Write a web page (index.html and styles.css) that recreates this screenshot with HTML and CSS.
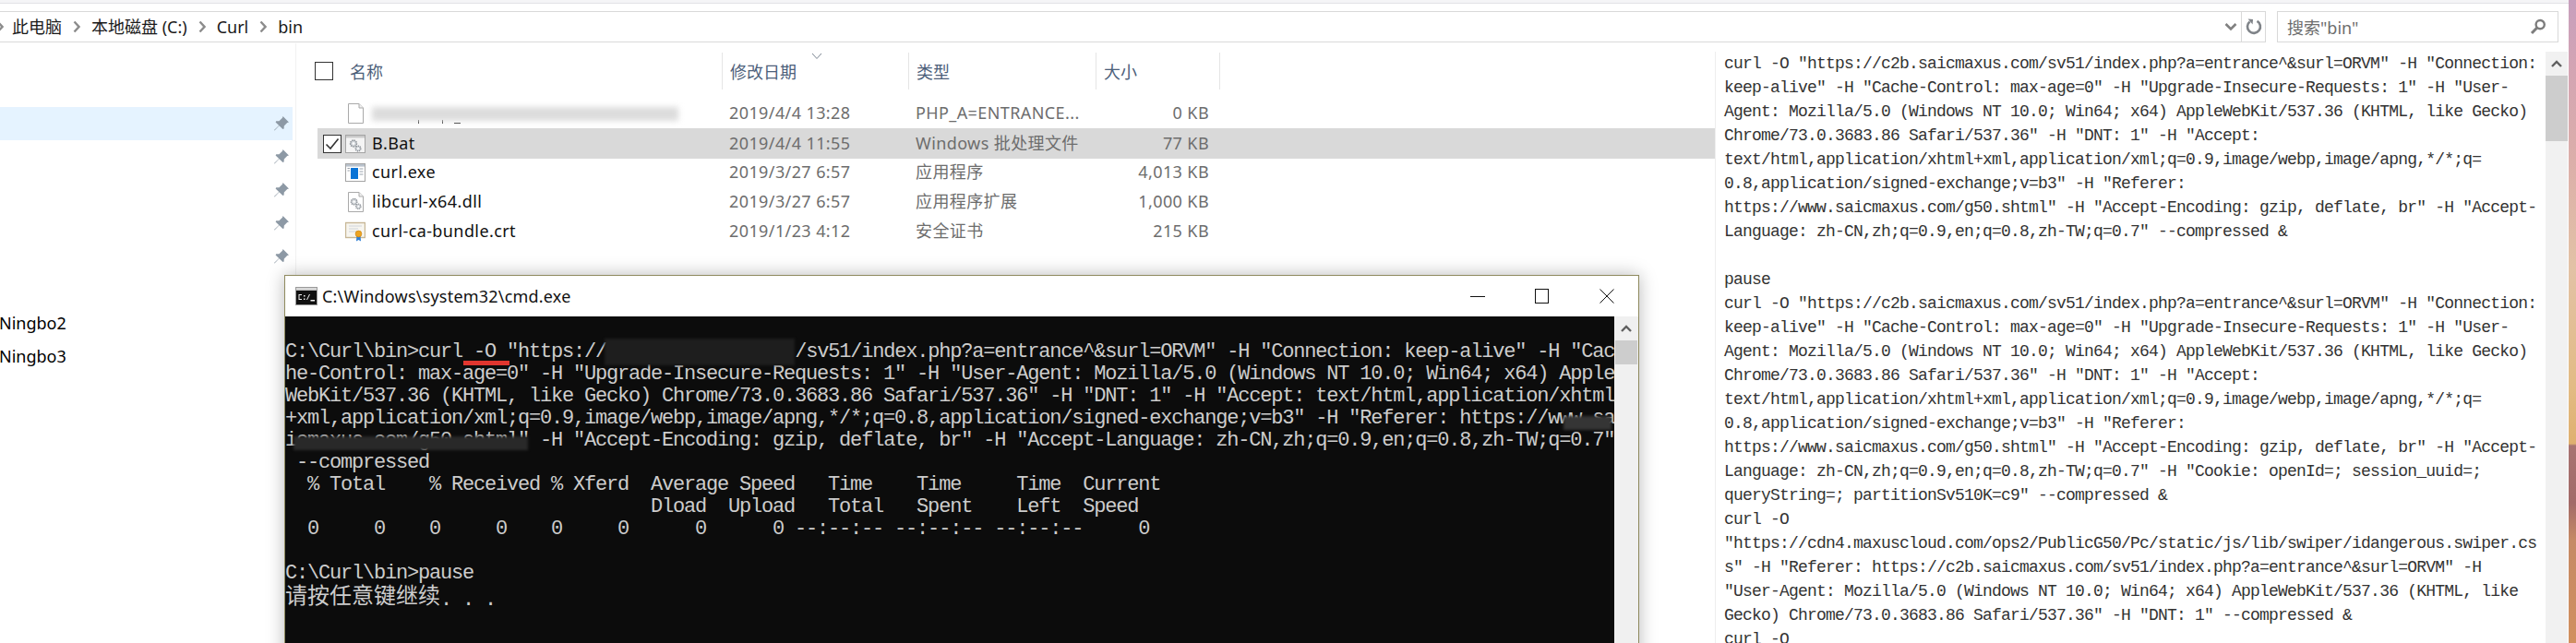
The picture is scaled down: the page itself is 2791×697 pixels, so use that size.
FILE: index.html
```html
<!DOCTYPE html>
<html lang="zh-CN">
<head>
<meta charset="utf-8">
<title>bin</title>
<link rel="stylesheet" href="styles.css">
</head>
<body>
<svg class="defs" width="0" height="0" aria-hidden="true">
  <defs>
    <symbol id="chev" viewBox="0 0 8 14"><path d="M1.5 1.5 6.5 7 1.5 12.5" fill="none" stroke="#8c8c8c" stroke-width="2.4"/></symbol>
    <symbol id="pin" viewBox="0 0 18 18"><path d="M10.5 1 17 7.5 15.2 8 11.8 11.6 11.6 14.6 10.4 15 6.5 11.2 1.5 16.5 1 16 6.2 10.9 2.6 7.4 3.2 6.3 6.4 6.2 10 2.8Z" fill="#8d99a5"/></symbol>
    <symbol id="gears" viewBox="0 0 16 16">
      <circle cx="6" cy="6" r="3.4" fill="#d4d8dc" stroke="#8b9096" stroke-width="1.6" stroke-dasharray="1.4 .9"/>
      <circle cx="6" cy="6" r="1.3" fill="#fff"/>
      <circle cx="11" cy="11.5" r="2.8" fill="#d4d8dc" stroke="#8b9096" stroke-width="1.4" stroke-dasharray="1.3 .8"/>
      <circle cx="11" cy="11.5" r="1" fill="#fff"/>
    </symbol>
  </defs>
</svg>

<div class="screen">
  <div class="shell">
    <div class="topstrip"></div>

    <div class="toolbar">
      <div class="address">
        <nav class="crumbs">
          <svg class="chev chev-first"><use href="#chev"/></svg>
          <span class="crumb">此电脑</span>
          <svg class="chev"><use href="#chev"/></svg>
          <span class="crumb">本地磁盘 (C:)</span>
          <svg class="chev"><use href="#chev"/></svg>
          <span class="crumb">Curl</span>
          <svg class="chev"><use href="#chev"/></svg>
          <span class="crumb">bin</span>
        </nav>
        <div class="addr-drop">
          <svg width="14" height="10" viewBox="0 0 14 10"><path d="M1.5 2 7 7.5 12.5 2" fill="none" stroke="#808080" stroke-width="2.6"/></svg>
        </div>
        <div class="addr-refresh">
          <svg width="18" height="18" viewBox="0 0 18 18"><path d="M12.5 2.8A7 7 0 1 1 4.6 3.4" fill="none" stroke="#7f8388" stroke-width="2.6"/><path d="M2.6 .6 8 1 7.6 6.6Z" fill="#7f8388"/></svg>
        </div>
      </div>
      <div class="search">
        <span class="search-text">搜索"bin"</span>
        <svg width="18" height="18" viewBox="0 0 18 18"><circle cx="11.2" cy="6.6" r="4.6" fill="none" stroke="#7d7d7d" stroke-width="2.4"/><path d="M7.8 10 2 16" stroke="#7d7d7d" stroke-width="3" fill="none"/></svg>
      </div>
    </div>

    <div class="content">
      <aside class="sidebar">
        <div class="nav-row nav-row-active"><svg class="pin"><use href="#pin"/></svg></div>
        <div class="nav-row"><svg class="pin"><use href="#pin"/></svg></div>
        <div class="nav-row"><svg class="pin"><use href="#pin"/></svg></div>
        <div class="nav-row"><svg class="pin"><use href="#pin"/></svg></div>
        <div class="nav-row"><svg class="pin"><use href="#pin"/></svg></div>
        <div class="nav-row"></div>
        <div class="nav-row nav-label">Ningbo2</div>
        <div class="nav-row nav-label">Ningbo3</div>
      </aside>

      <section class="files">
        <div class="file-head">
          <div class="head-name"><span class="checkbox"></span><span>名称</span></div>
          <div class="head-cell">修改日期<svg class="sort" width="12" height="8" viewBox="0 0 12 8"><path d="M1 1 6 6.5 11 1" fill="none" stroke="#7d8793" stroke-width="1"/></svg></div>
          <div class="head-cell">类型</div>
          <div class="head-cell head-last">大小</div>
        </div>

        <div class="file-row">
          <div class="name">
            <span class="check-slot"></span>
            <svg class="file-icon" viewBox="0 0 22 22"><path d="M3.5 .5H15L19.5 5V21.5H3.5Z" fill="#fff" stroke="#a9a9a9"/><path d="M15 .5V5H19.5" fill="#f0f0f0" stroke="#a9a9a9"/></svg>
            <span class="smeared"><span class="smear"></span></span>
          </div>
          <div class="cell">2019/4/4 13:28</div>
          <div class="cell">PHP_A=ENTRANCE...</div>
          <div class="cell size">0 KB</div>
        </div>

        <div class="file-row file-row-selected">
          <div class="name">
            <span class="check-slot checkbox checkbox-on">
              <svg width="18" height="18" viewBox="0 0 18 18"><path d="M2.5 9.5 7 14 15.5 3.5" fill="none" stroke="#333" stroke-width="1.6"/></svg>
            </span>
            <svg class="file-icon" viewBox="0 0 22 22"><rect x=".5" y="1.5" width="21" height="19" fill="#f4f4f4" stroke="#a4a4a4"/><rect x="1" y="2" width="20" height="2.4" fill="#c9c9c9"/><use href="#gears" x="3" y="4.5" width="16" height="16"/></svg>
            <span class="file-name">B.Bat</span>
          </div>
          <div class="cell">2019/4/4 11:55</div>
          <div class="cell">Windows 批处理文件</div>
          <div class="cell size">77 KB</div>
        </div>

        <div class="file-row">
          <div class="name">
            <span class="check-slot"></span>
            <svg class="file-icon" viewBox="0 0 22 22"><rect x=".5" y="1.5" width="21" height="19" fill="#fff" stroke="#a4a4a4"/><rect x="1" y="2" width="20" height="2.6" fill="#b9c2cc"/><rect x="6" y="6" width="8" height="12" fill="#0a74d6"/><path d="M2.5 6.5H5M2.5 9H5M15.5 7H19.5M15.5 10H19.5M15.5 13H19.5" stroke="#9aa3ad"/></svg>
            <span class="file-name">curl.exe</span>
          </div>
          <div class="cell">2019/3/27 6:57</div>
          <div class="cell">应用程序</div>
          <div class="cell size">4,013 KB</div>
        </div>

        <div class="file-row">
          <div class="name">
            <span class="check-slot"></span>
            <svg class="file-icon" viewBox="0 0 22 22"><path d="M3.5 .5H15L19.5 5V21.5H3.5Z" fill="#fff" stroke="#a9a9a9"/><path d="M15 .5V5H19.5" fill="#f0f0f0" stroke="#a9a9a9"/><use href="#gears" x="4" y="5" width="15" height="15"/></svg>
            <span class="file-name">libcurl-x64.dll</span>
          </div>
          <div class="cell">2019/3/27 6:57</div>
          <div class="cell">应用程序扩展</div>
          <div class="cell size">1,000 KB</div>
        </div>

        <div class="file-row">
          <div class="name">
            <span class="check-slot"></span>
            <svg class="file-icon" viewBox="0 0 22 22"><rect x=".5" y="1.5" width="21" height="16" fill="#f7f5ef" stroke="#c7b796" stroke-width="1.4"/><path d="M4 5H18M4 8H14M4 11H12" stroke="#cfd4da"/><path d="M12.5 15 12 21.5 14.5 20 17 21.5 16.5 15Z" fill="#2e7fd6"/><circle cx="14.5" cy="13.5" r="3.4" fill="#eda421" stroke="#c67f12" stroke-width=".6"/></svg>
            <span class="file-name">curl-ca-bundle.crt</span>
          </div>
          <div class="cell">2019/1/23 4:12</div>
          <div class="cell">安全证书</div>
          <div class="cell size">215 KB</div>
        </div>
      </section>

      <section class="notes">
<pre class="notes-text">curl -O "https://c2b.saicmaxus.com/sv51/index.php?a=entrance^&amp;surl=ORVM" -H "Connection:
keep-alive" -H "Cache-Control: max-age=0" -H "Upgrade-Insecure-Requests: 1" -H "User-
Agent: Mozilla/5.0 (Windows NT 10.0; Win64; x64) AppleWebKit/537.36 (KHTML, like Gecko)
Chrome/73.0.3683.86 Safari/537.36" -H "DNT: 1" -H "Accept:
text/html,application/xhtml+xml,application/xml;q=0.9,image/webp,image/apng,*/*;q=
0.8,application/signed-exchange;v=b3" -H "Referer:
https://www.saicmaxus.com/g50.shtml" -H "Accept-Encoding: gzip, deflate, br" -H "Accept-
Language: zh-CN,zh;q=0.9,en;q=0.8,zh-TW;q=0.7" --compressed &amp;

pause
curl -O "https://c2b.saicmaxus.com/sv51/index.php?a=entrance^&amp;surl=ORVM" -H "Connection:
keep-alive" -H "Cache-Control: max-age=0" -H "Upgrade-Insecure-Requests: 1" -H "User-
Agent: Mozilla/5.0 (Windows NT 10.0; Win64; x64) AppleWebKit/537.36 (KHTML, like Gecko)
Chrome/73.0.3683.86 Safari/537.36" -H "DNT: 1" -H "Accept:
text/html,application/xhtml+xml,application/xml;q=0.9,image/webp,image/apng,*/*;q=
0.8,application/signed-exchange;v=b3" -H "Referer:
https://www.saicmaxus.com/g50.shtml" -H "Accept-Encoding: gzip, deflate, br" -H "Accept-
Language: zh-CN,zh;q=0.9,en;q=0.8,zh-TW;q=0.7" -H "Cookie: openId=; session_uuid=;
queryString=; partitionSv510K=c9" --compressed &amp;
curl -O
"https://cdn4.maxuscloud.com/ops2/PublicG50/Pc/static/js/lib/swiper/idangerous.swiper.cs
s" -H "Referer: https://c2b.saicmaxus.com/sv51/index.php?a=entrance^&amp;surl=ORVM" -H
"User-Agent: Mozilla/5.0 (Windows NT 10.0; Win64; x64) AppleWebKit/537.36 (KHTML, like
Gecko) Chrome/73.0.3683.86 Safari/537.36" -H "DNT: 1" --compressed &amp;
curl -O</pre>
      </section>

      <div class="scrollbar">
        <div class="scroll-up">
          <svg width="12" height="8" viewBox="0 0 12 8"><path d="M1 7 6 2 11 7" fill="none" stroke="#606060" stroke-width="2.4"/></svg>
        </div>
        <div class="scroll-thumb"></div>
      </div>
    </div>
  </div>

  <div class="wallpaper"></div>

  <div class="cmd">
    <div class="cmd-title">
      <svg class="cmd-icon" viewBox="0 0 24 20"><rect width="24" height="20" fill="#9a9a9a"/><rect x="1" y="1" width="22" height="2.5" fill="#d8d8d8"/><rect x="1" y="4" width="22" height="15" fill="#111"/><path d="M3.5 8H7V9H4.5V13H7V14H3.5ZM9 9H10.5V10.5H9ZM9 12.5H10.5V14H9ZM12 14 15 8H16L13 14ZM16.5 14H21V15.5H16.5Z" fill="#f2f2f2"/></svg>
      <span class="cmd-name">C:\Windows\system32\cmd.exe</span>
      <div class="cmd-controls">
        <svg width="16" height="16" viewBox="0 0 16 16"><path d="M0 8.5H16" stroke="#111" stroke-width="1"/></svg>
        <svg width="16" height="16" viewBox="0 0 16 16"><rect x=".5" y=".5" width="14" height="15" fill="none" stroke="#111"/></svg>
        <svg width="16" height="16" viewBox="0 0 16 16"><path d="M.5.5 15.5 15.5M15.5.5.5 15.5" stroke="#111" stroke-width="1"/></svg>
      </div>
    </div>
    <div class="cmd-body">
<pre class="console">C:\Curl\bin&gt;curl<span class="marked"> -O </span>"https://<span class="mask mask-url">                 </span>/sv51/index.php?a=entrance^&amp;surl=ORVM" -H "Connection: keep-alive" -H "Cac
he-Control: max-age=0" -H "Upgrade-Insecure-Requests: 1" -H "User-Agent: Mozilla/5.0 (Windows NT 10.0; Win64; x64) Apple
WebKit/537.36 (KHTML, like Gecko) Chrome/73.0.3683.86 Safari/537.36" -H "DNT: 1" -H "Accept: text/html,application/xhtml
+xml,application/xml;q=0.9,image/webp,image/apng,*/*;q=0.8,application/signed-exchange;v=b3" -H "Referer: https://ww<span class="mask mask-end">w.sa</span>
i<span class="mask mask-line">cmaxus.com/g50.shtml"</span> -H "Accept-Encoding: gzip, deflate, br" -H "Accept-Language: zh-CN,zh;q=0.9,en;q=0.8,zh-TW;q=0.7"
 --compressed
  % Total    % Received % Xferd  Average Speed   Time    Time     Time  Current
                                 Dload  Upload   Total   Spent    Left  Speed
  0     0    0     0    0     0      0      0 --:--:-- --:--:-- --:--:--     0

C:\Curl\bin&gt;pause
<span class="cjk">请按任意键继续</span>. . .</pre>
      <div class="cmd-scroll">
        <div class="cmd-scroll-up">
          <svg width="12" height="8" viewBox="0 0 12 8"><path d="M1 7 6 2 11 7" fill="none" stroke="#606060" stroke-width="2.4"/></svg>
        </div>
        <div class="cmd-scroll-thumb"></div>
      </div>
    </div>
  </div>
</div>
</body>
</html>
```

FILE: styles.css
```css
* { box-sizing: border-box; }

html, body {
  margin: 0;
  padding: 0;
  background: #fff;
  overflow: hidden;
}

.defs { position: absolute; }

.screen {
  position: relative;
  display: flex;
  width: 2791px;
  height: 697px;
  overflow: hidden;
  font-family: "Noto Sans", "Noto Sans CJK SC", sans-serif;
  font-size: 18px;
  color: #111;
}

.shell {
  flex: 0 0 2783px;
  display: flex;
  flex-direction: column;
  background: #fff;
}

.wallpaper {
  flex: 1;
  background: linear-gradient(180deg,
    #c79fbd 0, #d3a4b4 70px, #dbaeaa 170px, #e2c2a6 290px, #e2bb84 420px, #dfb070 481px,
    #a87472 483px, #a26a68 545px, #c58a66 585px, #d1905f 697px);
}

.topstrip {
  height: 4px;
  background: #f5f5f7;
  border-bottom: 1px solid #e2e2e6;
}

/* address bar */
.toolbar {
  display: flex;
  height: 34px;
  margin-top: 8px;
}

.address {
  flex: 0 0 2455px;
  display: flex;
  align-items: center;
  border: 1px solid #d9d9d9;
  border-left: 0;
}

.crumbs {
  flex: 1;
  display: flex;
  align-items: center;
  color: #1a1a1a;
}

.crumb { line-height: 24px; }

.chev {
  width: 8px;
  height: 14px;
  margin: 0 12px;
}

.chev-first {
  margin: 0 9px 0 -4px;
}

.addr-drop {
  flex: 0 0 26px;
  display: flex;
  justify-content: center;
  padding-left: 4px;
}

.addr-refresh {
  flex: 0 0 26px;
  height: 100%;
  display: flex;
  align-items: center;
  justify-content: center;
  border-left: 1px solid #d9d9d9;
}

.search {
  flex: 0 0 305px;
  margin-left: 12px;
  display: flex;
  align-items: center;
  justify-content: space-between;
  padding: 0 12px 0 10px;
  border: 1px solid #d9d9d9;
}

.search-text { color: #6d6d6d; }

/* panes */
.content {
  flex: 1;
  display: flex;
  min-height: 0;
  margin-top: 1px;
}

.sidebar {
  flex: 0 0 320px;
  padding-top: 69px;
}

.nav-row {
  height: 36px;
  width: 317px;
  display: flex;
  align-items: center;
  justify-content: flex-end;
  padding-right: 3px;
}

.nav-row-active { background: #e5f3ff; }

.nav-label {
  justify-content: flex-start;
  padding: 0;
  margin-left: -1px;
  color: #000;
}

.pin {
  width: 18px;
  height: 18px;
}

.files {
  flex: 0 0 1538px;
  padding-top: 10px;
  border-left: 1px solid #f2f2f2;
}

.file-head {
  display: grid;
  grid-template-columns: 441px 202px 203px 135px;
  height: 40px;
  margin-left: 20px;
  color: #4c607a;
}

.head-name {
  display: flex;
  align-items: center;
  gap: 18px;
}

.head-cell {
  position: relative;
  display: flex;
  align-items: center;
  padding-left: 8px;
  border-left: 1px solid #e5e5e5;
}

.head-last { border-right: 1px solid #e5e5e5; }

.sort {
  position: absolute;
  left: 96px;
  top: 0;
}

.checkbox {
  width: 20px;
  height: 20px;
  flex: none;
  background: #fff;
  border: 1px solid #333;
}

.file-row {
  display: grid;
  grid-template-columns: 437px 202px 203px 131px;
  height: 32px;
  align-items: center;
  margin-left: 23px;
  color: #6d6d6d;
  letter-spacing: .4px;
}

.file-head + .file-row { margin-top: 10px; }

.file-row-selected { background: #d9d9d9; height: 33px; margin-bottom: -1px; }

.name {
  display: flex;
  align-items: center;
  padding-left: 6px;
  color: #111;
}

.check-slot {
  flex: 0 0 20px;
  height: 20px;
  margin-right: 4px;
}

.checkbox-on {
  display: flex;
  align-items: center;
  justify-content: center;
}

.file-icon {
  flex: 0 0 22px;
  width: 22px;
  height: 22px;
  margin-right: 7px;
}

.file-name,
.cell {
  line-height: 24px;
  position: relative;
  top: -1px;
}

.smeared {
  position: relative;
  flex: none;
  width: 332px;
  height: 18px;
  margin-top: 4px;
  background:
    linear-gradient(#333, #333) 50px 14px / 1px 4px no-repeat,
    linear-gradient(#333, #333) 76px 14px / 1px 4px no-repeat,
    linear-gradient(#333, #333) 89px 17px / 7px 1px no-repeat;
}

.smear {
  display: block;
  height: 15px;
  background: #dcdcdc;
  filter: blur(3px);
}

.cell {
  padding-left: 9px;
  white-space: nowrap;
}

.size {
  padding: 0 7px 0 0;
  text-align: right;
}

/* text pane */
.notes {
  flex: 0 0 900px;
  margin: 9px 0 0 0;
  padding: 0 0 0 9px;
  border-left: 1px solid #eeeeee;
  overflow: hidden;
}

.notes-text {
  margin: 0;
  font-family: "Liberation Mono", "Noto Sans CJK SC", monospace;
  font-size: 18px;
  letter-spacing: -.8px;
  line-height: 26px;
  color: #333;
}

.scrollbar {
  flex: 0 0 24px;
  margin-top: 9px;
  background: #f1f1f1;
}

.scroll-up {
  height: 26px;
  display: flex;
  align-items: center;
  justify-content: center;
}

.scroll-thumb {
  height: 71px;
  background: #cdcdcd;
}

/* console window */
.cmd {
  position: absolute;
  left: 308px;
  top: 298px;
  width: 1468px;
  height: 420px;
  display: flex;
  flex-direction: column;
  background: #fff;
  border: 1px solid #8f8a5e;
  box-shadow: 0 0 18px rgba(0, 0, 0, .28);
}

.cmd-title {
  flex: 0 0 44px;
  display: flex;
  align-items: center;
  padding: 0 26px 0 11px;
  color: #111;
  letter-spacing: .2px;
}

.cmd-icon {
  width: 24px;
  height: 20px;
  margin-right: 5px;
}

.cmd-controls {
  margin-left: auto;
  display: flex;
  gap: 54px;
}

.cmd-body {
  flex: 1;
  display: flex;
  min-height: 0;
}

.console {
  flex: 0 0 1440px;
  margin: 0;
  padding-top: 27px;
  overflow: hidden;
  background: #0c0c0c;
  font-family: "Liberation Mono", "Noto Sans CJK SC", monospace;
  font-size: 22px;
  letter-spacing: -1.2px;
  line-height: 24px;
  color: #cccccc;
}

.cjk {
  font-family: "Noto Sans CJK SC", sans-serif;
  font-size: 24px;
  letter-spacing: 0;
  position: relative;
  top: -2px;
}

.marked { position: relative; }

.marked::after {
  content: "";
  position: absolute;
  left: 1px;
  right: -3px;
  bottom: -2px;
  height: 5px;
  background: #e0352f;
}

.mask { position: relative; }

.mask::after {
  content: "";
  position: absolute;
  filter: blur(1.5px);
}

.mask-url::after {
  left: -2px;
  right: 0;
  top: -2px;
  bottom: -2px;
  background: #1e1e1e;
}

.mask-line::after {
  left: -3px;
  right: 1px;
  top: 8px;
  height: 15px;
  background: #292929;
}

.mask-end::after {
  left: -7px;
  right: 3px;
  top: 10px;
  height: 15px;
  background: #353535;
}

.cmd-scroll {
  flex: 1;
  background: #f0f0f0;
}

.cmd-scroll-up {
  height: 26px;
  display: flex;
  align-items: center;
  justify-content: center;
}

.cmd-scroll-thumb {
  width: 24px;
  margin-left: 1px;
  height: 26px;
  background: #cdcdcd;
}
```
